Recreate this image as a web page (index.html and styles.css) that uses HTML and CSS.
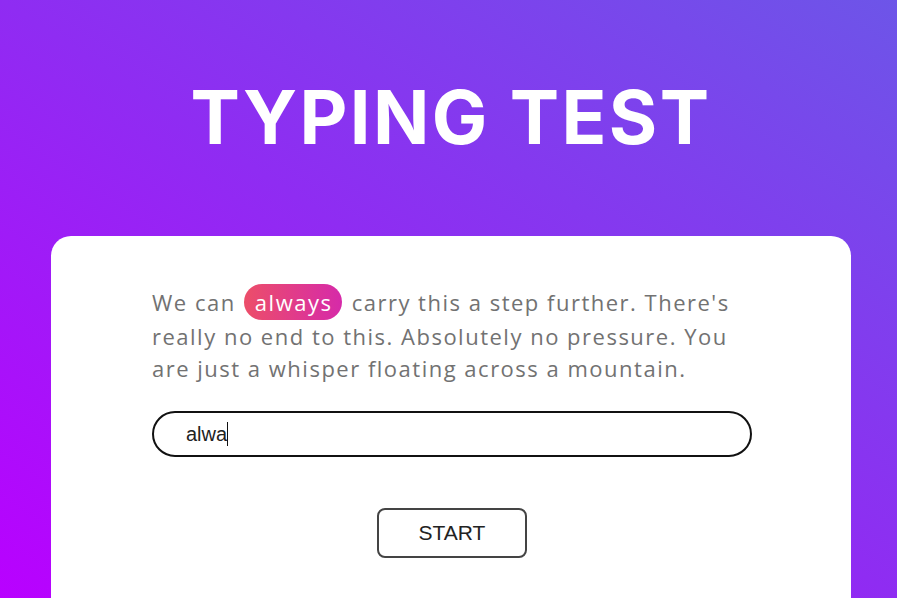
FILE: index.html
```html
<!DOCTYPE html>
<html lang="en">
<head>
<meta charset="utf-8">
<title>Typing Test</title>
<link rel="stylesheet" href="styles.css">
</head>
<body>
<main class="page">
  <h1 class="title">TYPING TEST</h1>
  <section class="card">
    <p class="quote">We can <span class="current">always</span> carry this a step further. There's really no end to this. Absolutely no pressure. You are just a whisper floating across a mountain.</p>
    <div class="field"><span class="typed">alwa</span><span class="caret"></span></div>
    <div class="actions"><button class="start" type="button">START</button></div>
  </section>
</main>
</body>
</html>
```
FILE: styles.css
```css
* { box-sizing: border-box; }
html, body { margin: 0; height: 100%; overflow: hidden; }
body {
  background: linear-gradient(to top right, #b900ff 0%, #8f2cf2 50%, #6d55e8 100%);
  font-family: "Open Sans", "Liberation Sans", sans-serif;
}
.page {
  display: flex;
  flex-direction: column;
  align-items: center;
  padding-top: 74px;
  padding-left: 5px;
}
.title {
  margin: 0;
  color: #fff;
  font-family: "Inter", "Liberation Sans", sans-serif;
  font-weight: 700;
  font-size: 74px;
  line-height: 86px;
  letter-spacing: 2.4px;
}
.card {
  margin-top: 76px;
  width: 800px;
  height: 400px;
  background: #fff;
  border-radius: 20px;
  padding: 48px 99px 0 101px;
}
.quote {
  margin: 0;
  width: 600px;
  color: #727272;
  font-size: 22px;
  line-height: 32px;
  letter-spacing: 1.5px;
}
.current {
  display: inline-block;
  margin: 0 2px 0 1px;
  padding: 0 10px 0 11px;
  line-height: 36px;
  border-radius: 18px;
  color: #fff;
  background: linear-gradient(to right, #ec4e69, #d62aa9);
}
.field {
  margin-top: 27px;
  height: 46px;
  width: 600px;
  border: 2px solid #111;
  border-radius: 23px;
  display: flex;
  align-items: center;
  padding-left: 32px;
  font-family: "Liberation Sans", sans-serif;
  font-size: 20px;
  color: #222;
}
.caret {
  display: inline-block;
  width: 1px;
  height: 24px;
  background: #111;
}
.actions {
  display: flex;
  justify-content: center;
  margin-top: 51px;
}
.start {
  width: 150px;
  height: 50px;
  border: 2px solid #444;
  border-radius: 8px;
  background: #fff;
  font-family: "Liberation Sans", sans-serif;
  font-size: 21px;
  color: #222;
  cursor: pointer;
}
```
